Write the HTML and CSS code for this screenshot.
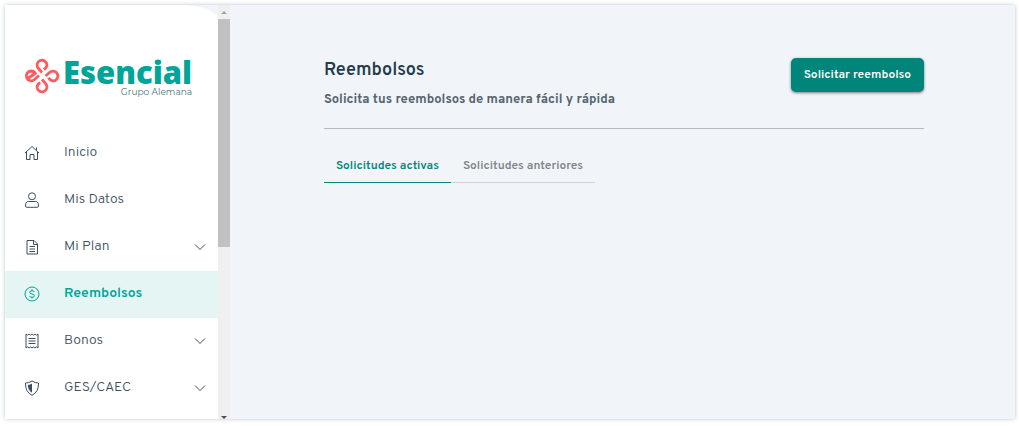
FILE: index.html
```html
<!DOCTYPE html>
<html lang="es">
<head>
    <meta charset="UTF-8">
    <meta name="viewport" content="width=device-width, initial-scale=1.0">
    <title>Reembolsos</title>
    <link rel="stylesheet" href="styles.css">
</head>
<body>
    <div class="app">
        <!-- Sidebar -->
        <aside class="sidebar">
            <div class="menu-panel">
                <a href="#" class="logo">
                    <svg class="logo-mark" viewBox="0 0 36 36" fill="none" stroke="#ff5a5f" stroke-width="2.8">
                        <path d="M18 14.500 L14.500 10.500 A4.900 4.900 0 1 1 22.900 7 Q22.900 9.500 19.800 11.500"/>
                        <path d="M18 14.500 L14.500 10.500 A4.900 4.900 0 1 1 22.900 7 Q22.900 9.500 19.800 11.500" transform="rotate(90 18 18)"/>
                        <path d="M18 14.500 L14.500 10.500 A4.900 4.900 0 1 1 22.900 7 Q22.900 9.500 19.800 11.500" transform="rotate(180 18 18)"/>
                        <path d="M4.500 20 L11 15.500 M12 16.500 Q10.500 13 7 13 A4.900 4.900 0 1 0 10.500 21.500 L15 17.500"/>
                    </svg>
                    <span class="logo-text">
                        <span class="logo-name">Esencial</span>
                        <span class="logo-group">Grupo Alemana</span>
                    </span>
                </a>

                <nav class="menu">
                    <a href="#" class="menu-item">
                        <svg class="icon" viewBox="0 0 16 16"><path d="M1 8 L8 1.500 L15 8 M12.500 2.500 V5 M2.500 7 V14.500 H6 V9.500 H10 V14.500 H13.500 V7"/></svg>
                        <span>Inicio</span>
                    </a>
                    <a href="#" class="menu-item">
                        <svg class="icon" viewBox="0 0 16 16"><circle cx="8" cy="4.300" r="3.500"/><path d="M3.500 9.500 H12.500 Q14.500 10.500 14.500 13 V14 Q14.500 15.300 13 15.300 H3 Q1.500 15.300 1.500 14 V13 Q1.500 10.500 3.500 9.500 Z"/></svg>
                        <span>Mis Datos</span>
                    </a>
                    <a href="#" class="menu-item">
                        <svg class="icon" viewBox="0 0 16 16"><path d="M3 1.500 H10 L13.500 5 V15 H3 Z M9.500 1.500 V5.500 H13.500 M5.500 7.500 H11 M5.500 10 H11 M5.500 12.500 H11"/></svg>
                        <span>Mi Plan</span>
                        <svg class="chevron" viewBox="0 0 12 12"><path d="M1 3.500 L6 8.500 L11 3.500"/></svg>
                    </a>
                    <a href="#" class="menu-item active">
                        <svg class="icon" viewBox="0 0 16 16"><circle cx="8" cy="8" r="7"/><path d="M10.300 6 Q10 4.700 8 4.700 Q5.700 4.700 5.700 6.200 Q5.700 7.500 8 8 Q10.400 8.400 10.400 9.800 Q10.400 11.300 8 11.300 Q5.900 11.300 5.600 10 M8 3.300 V4.700 M8 11.300 V12.700"/></svg>
                        <span>Reembolsos</span>
                    </a>
                    <a href="#" class="menu-item">
                        <svg class="icon" viewBox="0 0 16 16"><path d="M2 1 L3.500 2.200 L5 1 L6.500 2.200 L8 1 L9.500 2.200 L11 1 L12.500 2.200 L14 1 V15 L12.500 13.800 L11 15 L9.500 13.800 L8 15 L6.500 13.800 L5 15 L3.500 13.800 L2 15 Z M4.500 5.500 H11.500 M4.500 8 H11.500 M4.500 10.500 H11.500"/></svg>
                        <span>Bonos</span>
                        <svg class="chevron" viewBox="0 0 12 12"><path d="M1 3.500 L6 8.500 L11 3.500"/></svg>
                    </a>
                    <a href="#" class="menu-item">
                        <svg class="icon" viewBox="0 0 16 16"><path d="M8 1 Q11 3 14.500 3 Q14.800 12 8 15.300 Q1.200 12 1.500 3 Q5 3 8 1 Z"/><path class="fill" d="M8 3.500 V12.800 Q3.800 10 3.800 5 Q6.500 4.700 8 3.500 Z"/></svg>
                        <span>GES/CAEC</span>
                        <svg class="chevron" viewBox="0 0 12 12"><path d="M1 3.500 L6 8.500 L11 3.500"/></svg>
                    </a>
                </nav>
            </div>

            <div class="scrollbar">
                <span class="arrow arrow-up"></span>
                <span class="thumb"></span>
                <span class="arrow arrow-down"></span>
            </div>
        </aside>

        <!-- Content -->
        <main class="content">
            <header class="page-header">
                <div>
                    <h1>Reembolsos</h1>
                    <p>Solicita tus reembolsos de manera fácil y rápida</p>
                </div>
                <button type="button" class="request-btn">Solicitar reembolso</button>
            </header>

            <div class="tabs" role="tablist">
                <button type="button" class="tab selected" role="tab" aria-selected="true">Solicitudes activas</button>
                <button type="button" class="tab" role="tab" aria-selected="false">Solicitudes anteriores</button>
            </div>
        </main>
    </div>
</body>
</html>
```
FILE: styles.css
```css
/* General Page Styling */
* {
    box-sizing: border-box;
}

body {
    font-family: Overpass, Roboto, sans-serif;
    background-color: #ffffff;
    color: #3d4f5c;
    margin: 0;
    padding: 5px 4px 7px 5px;
}

.app {
    display: flex;
    height: calc(100vh - 12px);
    background-color: #f1f5fa;
    box-shadow: 0 0 4px rgba(60, 90, 110, 0.35);
}

/* Sidebar */
.sidebar {
    display: flex;
    flex-shrink: 0;
    width: 225px;
    overflow: hidden;
}

.menu-panel {
    flex: 1;
    background-color: #ffffff;
    border-top-right-radius: 40px 14px;
}

.logo {
    display: flex;
    align-items: flex-start;
    gap: 3px;
    height: 125px;
    padding: 53px 0 0 19px;
    text-decoration: none;
}

.logo-mark {
    width: 36px;
    height: 36px;
}

.logo-text {
    display: flex;
    flex-direction: column;
    align-items: flex-end;
}

.logo-name {
    font-family: "Noto Sans", sans-serif;
    font-size: 31px;
    font-weight: 900;
    line-height: 28px;
    color: #00a499;
}

.logo-group {
    font-family: Montserrat, Inter, sans-serif;
    font-size: 9px;
    line-height: 12px;
    color: #4a7480;
}

/* Menu */
.menu-item {
    display: flex;
    align-items: center;
    height: 47px;
    padding: 0 12px 2px 19px;
    font-size: 14px;
    font-weight: 300;
    color: #3d4f5c;
    text-decoration: none;
}

.menu-item span {
    flex: 1;
    margin-left: 24px;
}

.menu-item.active {
    background-color: #e4f5f4;
    color: #00a499;
    font-weight: 600;
}

.icon {
    width: 16px;
    height: 16px;
    fill: none;
    stroke: currentColor;
    stroke-width: 1;
}

.icon .fill {
    fill: currentColor;
    stroke: none;
}

.chevron {
    width: 12px;
    height: 12px;
    fill: none;
    stroke: currentColor;
    stroke-width: 1;
}

/* Scrollbar */
.scrollbar {
    display: flex;
    flex-direction: column;
    align-items: center;
    width: 12px;
    background-color: #f0f0f0;
}

.thumb {
    width: 100%;
    height: 55%;
    margin: 5px 0 auto;
    background-color: #c1c1c1;
}

.arrow {
    border: 3px solid transparent;
}

.arrow-up {
    margin-top: 3px;
    border-bottom-color: #a3a3a3;
}

.arrow-down {
    border-top-color: #505050;
    border-bottom: 0;
}

/* Content */
.content {
    flex: 1;
    padding: 53px 91px 0 94px;
}

.page-header {
    display: flex;
    justify-content: space-between;
    align-items: flex-start;
    padding-bottom: 18px;
    border-bottom: 1px solid #b3b8be;
}

h1 {
    margin: 2px 0 8px;
    font-size: 18px;
    line-height: 22px;
    font-weight: 600;
    color: #243b4a;
}

p {
    margin: 0;
    font-size: 13px;
    line-height: 20px;
    font-weight: 700;
    color: #56656f;
}

.request-btn {
    height: 34px;
    padding: 0 13px;
    border: none;
    border-radius: 5px;
    background-color: #00857a;
    box-shadow: 0 1px 3px rgba(0, 0, 0, 0.5);
    color: #ffffff;
    font-family: inherit;
    font-size: 12px;
    font-weight: 600;
    cursor: pointer;
}

/* Tabs */
.tabs {
    display: flex;
    margin-top: 19px;
}

.tab {
    height: 35px;
    padding: 2px 12px 0;
    border: none;
    border-bottom: 1px solid #cfd4d9;
    background: none;
    color: #808488;
    font-family: inherit;
    font-size: 12px;
    font-weight: 600;
    cursor: pointer;
}

.tab.selected {
    border-bottom-color: #00857a;
    color: #00857a;
}
```
